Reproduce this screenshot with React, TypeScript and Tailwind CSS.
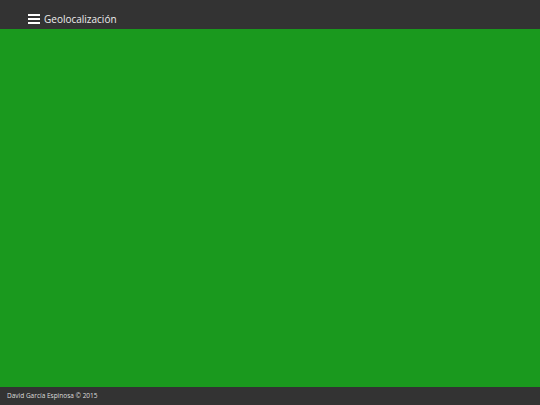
export default function App() {
  return (
    <div className="flex h-[405px] w-[540px] flex-col bg-[#1a991e]" style={{ fontFamily: '"Open Sans", sans-serif' }}>
      <header className="flex h-[29px] shrink-0 items-end bg-[#333333] pb-[2px] pl-[28px]">
        <div className="mb-[3px] flex w-[12px] flex-col gap-[2px]">
          <span className="block h-[2px] bg-white" />
          <span className="block h-[2px] bg-white" />
          <span className="block h-[2px] bg-white" />
        </div>
        <h1 className="ml-[4px] text-[10px] leading-[15px] text-[#eeeeee]">Geolocalización</h1>
      </header>
      <main className="flex-1 bg-[#1a991e]" />
      <footer className="flex h-[18px] shrink-0 items-center bg-[#333333] pl-[7px]">
        <p className="text-[6.5px] text-[#dddddd]">David García Espinosa © 2015</p>
      </footer>
    </div>
  );
}
